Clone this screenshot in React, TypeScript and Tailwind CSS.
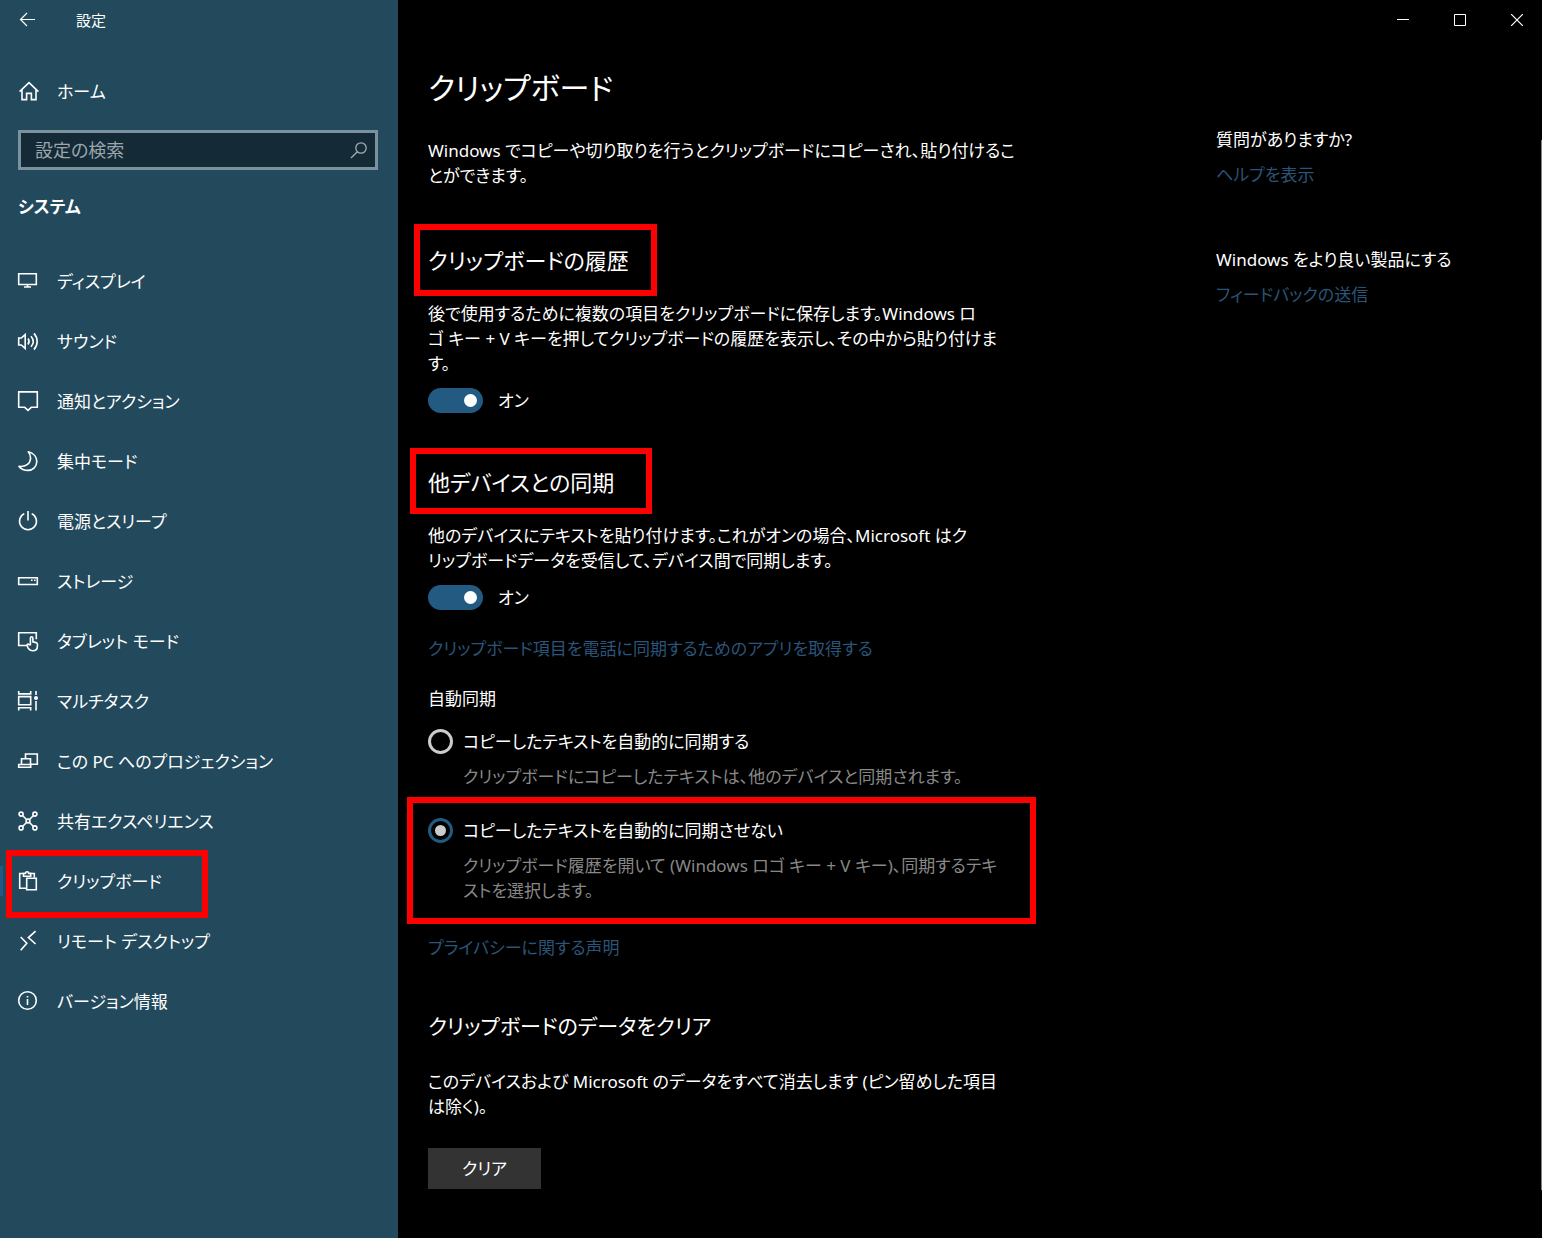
import type { ReactNode } from "react";

function Icon({ children }: { children: ReactNode }) {
  return (
    <svg
      viewBox="0 0 22 22"
      className="size-[22px] shrink-0"
      fill="none"
      stroke="currentColor"
      strokeWidth="1.6"
      aria-hidden="true"
    >
      {children}
    </svg>
  );
}

const icons = {
  home: (
    <Icon>
      <path d="M2.6 11.6 12 2.6l9.4 9M5 9.6v10h4.6v-6.2h4.8v6.2H19v-10" />
    </Icon>
  ),
  display: (
    <Icon>
      <path d="M1.7 3.7h17.6v10.8H1.7zM10.5 14.5V17M7 17h7" />
    </Icon>
  ),
  sound: (
    <Icon>
      <path d="M1.7 8h2.6l3.9-3.4v13.8L4.3 15H1.7z" />
      <path d="M11 8.6c1.4 1.8 1.4 4 0 5.8M14 6.2c2.7 3.2 2.7 7.4 0 10.6M17 3.4c4.2 4.8 4.2 11.4 0 16.2" />
    </Icon>
  ),
  notification: (
    <Icon>
      <path d="M1.7 1.9h18.6v15.4h-6L11 20.4l-3.3-3.1h-6z" />
    </Icon>
  ),
  moon: (
    <Icon>
      <path
        d="M11.3 1.8C16.6 3 19.8 7 19.8 11.6c0 5-4 8.8-8.8 8.8-3.8 0-7-1.6-9-4 6.4.8 11.4-2.8 11.6-8.2 0-2.4-.8-4.6-2.3-6.4z"
        strokeLinejoin="round"
      />
    </Icon>
  ),
  power: (
    <Icon>
      <path d="M11 1v9.6M7.3 3.6a8.5 8.5 0 1 0 7.4 0" />
    </Icon>
  ),
  storage: (
    <Icon>
      <path d="M1.7 7.7h18.6v6.8H1.7z" />
      <path d="M14 10.3h1.6M17 10.3h1.6" />
    </Icon>
  ),
  tablet: (
    <Icon>
      <path d="M10 15.5H1.7V2.7h17.6v6.6" />
      <path d="M13.4 14.6V8.2c0-1.9 2.5-1.9 2.5 0v3.6l3.2.8c.9.3 1.3.8 1.3 1.7v2c0 2.8-1.8 4.4-4.6 4.4-2.5 0-3.7-1-4.6-2.6l-1-2.1c-.8-1.6 1.1-2.5 2-1.1z" />
    </Icon>
  ),
  multitask: (
    <Icon>
      <path d="M1.7 1v2.9h12V1M1.7 6.6h12v8.2h-12zM1.7 20.6v-2.9h12v2.9M19 1v4M19 11v9.6" />
      <circle cx="19" cy="8" r="2" fill="currentColor" stroke="none" />
    </Icon>
  ),
  project: (
    <Icon>
      <path d="M8.5 8.7V4h11.8v10.3h-6.8M4.5 14.3V8.7h9v5.6M1.7 14.5h12v2.8h-12z" />
    </Icon>
  ),
  share: (
    <Icon>
      <path d="m5.5 5.5 4 4M16.5 5.5l-4 4M5.5 16.5l4-4M16.5 16.5l-4-4" />
      <circle cx="11" cy="11" r="1.9" />
      <circle cx="4.1" cy="4.1" r="2" />
      <circle cx="17.9" cy="4.1" r="2" />
      <circle cx="4.1" cy="17.9" r="2" />
      <circle cx="17.9" cy="17.9" r="2" />
    </Icon>
  ),
  clipboard: (
    <Icon>
      <path d="M9 18.3H2.7V3.5h4M13.3 3.5h4v3.8M6.5 6.3V3.4h2a1.6 1.6 0 0 1 3.2 0h2v2.9zM9.7 8.3h9.6v11.5H9.7z" />
    </Icon>
  ),
  remote: (
    <Icon>
      <path d="M3.7 7 9.8 13.2l-6.1 7M18.6 1.2 11.4 7.6l7.2 6.4" />
    </Icon>
  ),
  info: (
    <Icon>
      <circle cx="10.5" cy="10.5" r="8.8" />
      <path d="M10.5 9v6M10.5 6v1.5" />
    </Icon>
  ),
};

const navItems: { label: string; icon: ReactNode; current?: boolean }[] = [
  { label: "ディスプレイ", icon: icons.display },
  { label: "サウンド", icon: icons.sound },
  { label: "通知とアクション", icon: icons.notification },
  { label: "集中モード", icon: icons.moon },
  { label: "電源とスリープ", icon: icons.power },
  { label: "ストレージ", icon: icons.storage },
  { label: "タブレット モード", icon: icons.tablet },
  { label: "マルチタスク", icon: icons.multitask },
  { label: "この PC へのプロジェクション", icon: icons.project },
  { label: "共有エクスペリエンス", icon: icons.share },
  { label: "クリップボード", icon: icons.clipboard, current: true },
  { label: "リモート デスクトップ", icon: icons.remote },
  { label: "バージョン情報", icon: icons.info },
];

function Sidebar() {
  return (
    <aside className="w-[398px] shrink-0 bg-[#23495d]">
      <div className="flex h-10 items-center gap-10 pl-[18px] text-[15px]">
        <button type="button" aria-label="戻る" className="flex">
          <svg
            viewBox="0 0 18 18"
            className="size-[18px]"
            fill="none"
            stroke="currentColor"
            strokeWidth="1.2"
            aria-hidden="true"
          >
            <path d="M17 8.5H2.5M9 2 2.5 8.5 9 15" />
          </svg>
        </button>
        <span>設定</span>
      </div>
      <a href="#home" className="mt-[21px] flex h-[60px] items-center gap-[18px] pl-[17px]">
        {icons.home}
        <span>ホーム</span>
      </a>
      <label className="mt-[9px] mr-5 ml-[18px] flex h-10 items-center border-[3px] border-[#7a929e] bg-[#152a37] pr-[7px] pl-[14px]">
        <input
          type="text"
          aria-label="設定の検索"
          placeholder="設定の検索"
          className="min-w-0 flex-1 bg-transparent text-[18px] outline-none placeholder:text-[#9aa6ad]"
        />
        <svg
          viewBox="0 0 18 18"
          className="size-[18px]"
          fill="none"
          stroke="#a1adb3"
          strokeWidth="1.3"
          aria-hidden="true"
        >
          <circle cx="11" cy="7" r="5.2" />
          <path d="M7.3 10.7 1 17" />
        </svg>
      </label>
      <h2 className="mt-[23px] pl-[18px] leading-7 font-bold">システム</h2>
      <nav className="mt-[30px] flex flex-col">
        {navItems.map((item) => (
          <a
            key={item.label}
            href="#section"
            aria-current={item.current ? "page" : undefined}
            className="relative flex h-[60px] items-center gap-[18px] pl-[17px]"
          >
            {item.icon}
            <span>{item.label}</span>
            {item.current && (
              <>
                <span className="absolute top-[15px] left-0 h-[30px] w-[3px] bg-[#215a84]" />
                <span className="absolute -top-px left-[6px] h-[68px] w-[202px] border-[6px] border-[#ff0000]" />
              </>
            )}
          </a>
        ))}
      </nav>
    </aside>
  );
}

function WindowControls() {
  return (
    <div className="flex h-10 justify-end gap-[7px]">
      <button type="button" aria-label="最小化" className="flex w-[50px] items-center justify-center">
        <svg viewBox="0 0 12 12" className="size-[12px]" stroke="currentColor" aria-hidden="true">
          <path d="M0 5.5h12" />
        </svg>
      </button>
      <button type="button" aria-label="最大化" className="flex w-[50px] items-center justify-center">
        <svg viewBox="0 0 12 12" className="size-[12px]" fill="none" stroke="currentColor" aria-hidden="true">
          <path d="M.5.5h11v11H.5z" />
        </svg>
      </button>
      <button type="button" aria-label="閉じる" className="flex w-[50px] items-center justify-center">
        <svg viewBox="0 0 12 12" className="size-[12px]" stroke="currentColor" strokeWidth="1.2" aria-hidden="true">
          <path d="m0 0 12 12M12 0 0 12" />
        </svg>
      </button>
    </div>
  );
}

function Toggle({ label }: { label: string }) {
  return (
    <label className="mt-[12px] flex h-[25px] items-center gap-[15px]">
      <input
        type="checkbox"
        role="switch"
        aria-label={label}
        defaultChecked
        className="relative h-[25px] w-[55px] appearance-none rounded-full bg-[#235a82] after:absolute after:top-[6px] after:right-[6px] after:size-[13px] after:rounded-full after:bg-white"
      />
      <span>オン</span>
    </label>
  );
}

function SyncOption({
  id,
  title,
  checked,
  children,
}: {
  id: string;
  title: string;
  checked?: boolean;
  children: ReactNode;
}) {
  return (
    <div className="flex gap-[10px]">
      <input
        type="radio"
        name="sync"
        id={id}
        defaultChecked={checked}
        className="relative size-[25px] shrink-0 appearance-none rounded-full border-[3px] border-[#cccccc] checked:border-[#235a82] checked:after:absolute checked:after:inset-1 checked:after:rounded-full checked:after:bg-[#cccccc]"
      />
      <div>
        <label htmlFor={id} className="block leading-[25px]">
          {title}
        </label>
        <p className="mt-[10px] text-[#888888]">{children}</p>
      </div>
    </div>
  );
}

const linkClass = "text-[#2a5478]";

export default function App() {
  return (
    <div className="flex min-h-screen bg-black font-['Noto_Sans','Noto_Sans_CJK_JP',sans-serif] text-[17px] leading-[25px] whitespace-nowrap text-white [font-feature-settings:'palt']">
      <Sidebar />
      <div className="relative flex min-w-0 flex-1 flex-col">
        <WindowControls />
        <div className="flex flex-1 pl-[30px]">
          <main className="w-[788px] shrink-0">
            <h1 className="mt-6 text-[30px] leading-[48px]">クリップボード</h1>
            <p className="mt-[26px]">
              Windows でコピーや切り取りを行うとクリップボードにコピーされ、貼り付けるこ
              <br />
              とができます。
            </p>

            <section className="mt-[54px]">
              <h2 className="relative text-[22px] leading-[36px]">
                クリップボードの履歴
                <span className="absolute -top-[18px] -left-[14px] h-[72px] w-[243px] border-[6px] border-[#ff0000]" />
              </h2>
              <p className="mt-[23px]">
                後で使用するために複数の項目をクリップボードに保存します。Windows ロ
                <br />
                ゴ キー + V キーを押してクリップボードの履歴を表示し、その中から貼り付けま
                <br />
                す。
              </p>
              <Toggle label="クリップボードの履歴" />
            </section>

            <section className="mt-[51px]">
              <h2 className="relative text-[22px] leading-[36px]">
                他デバイスとの同期
                <span className="absolute -top-[16px] -left-[18px] h-[66px] w-[242px] border-[6px] border-[#ff0000]" />
              </h2>
              <p className="mt-[23px]">
                他のデバイスにテキストを貼り付けます。これがオンの場合、Microsoft はク
                <br />
                リップボードデータを受信して、デバイス間で同期します。
              </p>
              <Toggle label="他デバイスとの同期" />
              <a href="#phone" className={`mt-[26px] block w-fit ${linkClass}`}>
                クリップボード項目を電話に同期するためのアプリを取得する
              </a>
              <h3 className="mt-[25px]">自動同期</h3>
              <div className="mt-[18px]">
                <SyncOption id="sync-auto" title="コピーしたテキストを自動的に同期する">
                  クリップボードにコピーしたテキストは、他のデバイスと同期されます。
                </SyncOption>
              </div>
              <div className="relative mt-[29px]">
                <SyncOption id="sync-manual" title="コピーしたテキストを自動的に同期させない" checked>
                  クリップボード履歴を開いて (Windows ロゴ キー + V キー)、同期するテキ
                  <br />
                  ストを選択します。
                </SyncOption>
                <span className="pointer-events-none absolute -top-[21px] -left-[21px] h-[127px] w-[629px] border-[6px] border-[#ff0000]" />
              </div>
              <a href="#privacy" className={`mt-[32px] block w-fit ${linkClass}`}>
                プライバシーに関する声明
              </a>
            </section>

            <section className="mt-12">
              <h2 className="text-[21px] leading-[36px]">クリップボードのデータをクリア</h2>
              <p className="mt-[25px]">
                このデバイスおよび Microsoft のデータをすべて消去します (ピン留めした項目
                <br />
                は除く)。
              </p>
              <button type="button" className="mt-[29px] h-[41px] w-[113px] bg-[#333333]">
                クリア
              </button>
            </section>
          </main>
          <aside className="mt-[87px]">
            <h3>質問がありますか?</h3>
            <a href="#help" className={`mt-[10px] block w-fit ${linkClass}`}>
              ヘルプを表示
            </a>
            <h3 className="mt-[60px]">Windows をより良い製品にする</h3>
            <a href="#feedback" className={`mt-[10px] block w-fit ${linkClass}`}>
              フィードバックの送信
            </a>
          </aside>
        </div>
        <div className="absolute top-[140px] right-0 bottom-12 w-px bg-[#808080]" />
      </div>
    </div>
  );
}
